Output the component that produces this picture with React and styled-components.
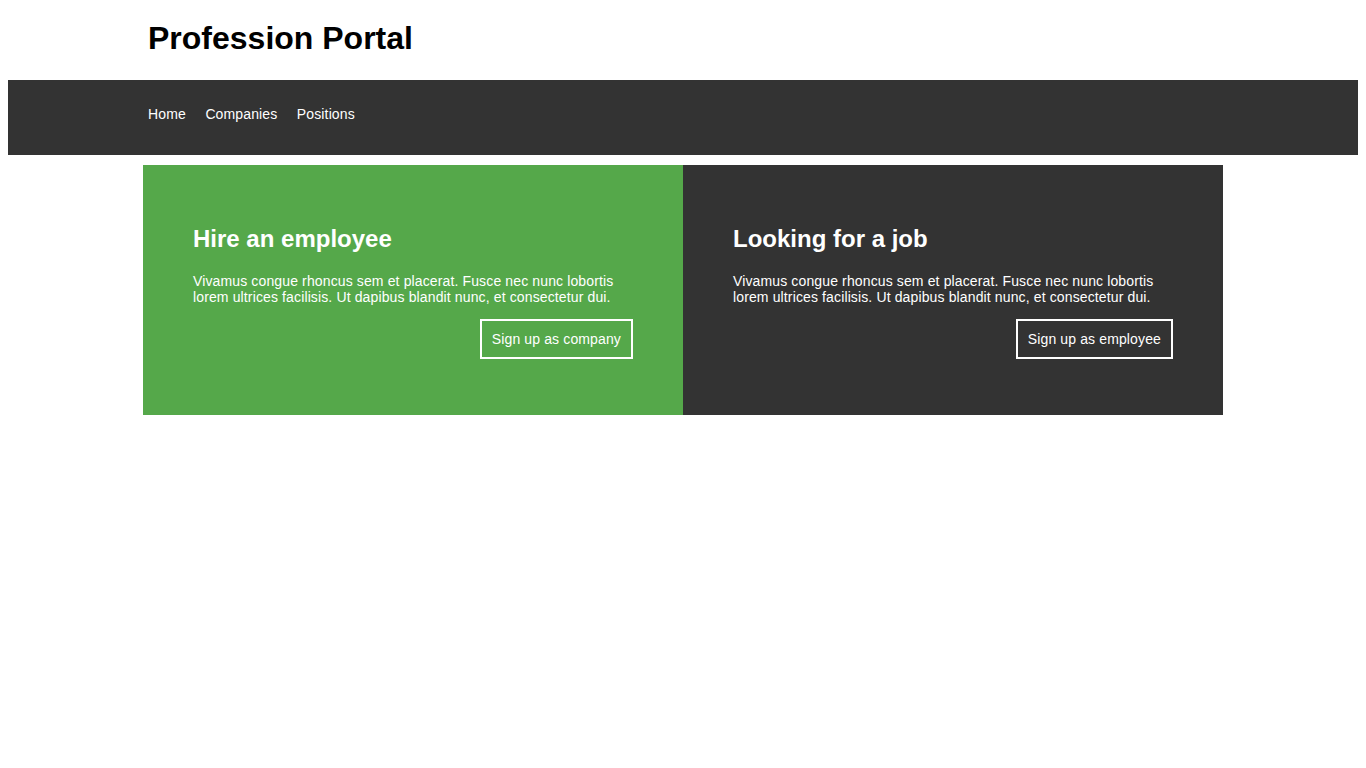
import styled, { createGlobalStyle } from "styled-components";

const GlobalStyle = createGlobalStyle`
  body {
    margin: 8px;
    background: #fff;
    font-family: "Liberation Sans", Arial, sans-serif;
  }
`;

const Container = styled.div`
  width: 1080px;
  margin: 0 auto;
  box-sizing: border-box;
  padding: ${(p) => (p.$flush ? "0" : "0 5px")};
`;

const Header = styled.header`
  height: 72px;
  box-sizing: border-box;
  padding-top: 12px;
`;

const Title = styled.h1`
  margin: 0;
  font-size: 32px;
  font-weight: bold;
  color: #000;
`;

const NavBar = styled.nav`
  background: #333;
  height: 75px;
  box-sizing: border-box;
  padding-top: 25px;
`;

const NavList = styled.ul`
  list-style: none;
  margin: 0;
  padding: 0;
  display: flex;
  gap: 19.5px;
`;

const NavLink = styled.a`
  color: #fff;
  font-size: 14px;
  line-height: 16px;
  letter-spacing: 0.13px;
  text-decoration: none;
`;

const Cards = styled.section`
  margin-top: 10px;
  display: grid;
  grid-template-columns: 1fr 1fr;
`;

const Card = styled.div`
  background: ${(p) => (p.$green ? "#55a84a" : "#333")};
  color: #fff;
  height: 250px;
  box-sizing: border-box;
  padding: 60px 50px 0;
  display: flex;
  flex-direction: column;
`;

const CardTitle = styled.h2`
  margin: 0 0 20px;
  font-size: 24px;
  font-weight: bold;
`;

const CardText = styled.p`
  margin: 0 0 14px;
  font-size: 14px;
  line-height: 16px;
  letter-spacing: 0.13px;
`;

const Button = styled.a`
  align-self: flex-end;
  border: 2px solid #fff;
  color: #fff;
  font-size: 14px;
  line-height: 16px;
  letter-spacing: 0.13px;
  padding: 10px 10px;
  text-decoration: none;
`;

const text =
  "Vivamus congue rhoncus sem et placerat. Fusce nec nunc lobortis lorem ultrices facilisis. Ut dapibus blandit nunc, et consectetur dui.";

export default function App() {
  return (
    <>
      <GlobalStyle />
      <Container>
        <Header>
          <Title>Profession Portal</Title>
        </Header>
      </Container>
      <NavBar>
        <Container>
          <NavList>
            <li><NavLink href="#">Home</NavLink></li>
            <li><NavLink href="#">Companies</NavLink></li>
            <li><NavLink href="#">Positions</NavLink></li>
          </NavList>
        </Container>
      </NavBar>
      <Container $flush>
        <Cards>
          <Card $green>
            <CardTitle>Hire an employee</CardTitle>
            <CardText>{text}</CardText>
            <Button href="#">Sign up as company</Button>
          </Card>
          <Card>
            <CardTitle>Looking for a job</CardTitle>
            <CardText>{text}</CardText>
            <Button href="#">Sign up as employee</Button>
          </Card>
        </Cards>
      </Container>
    </>
  );
}
